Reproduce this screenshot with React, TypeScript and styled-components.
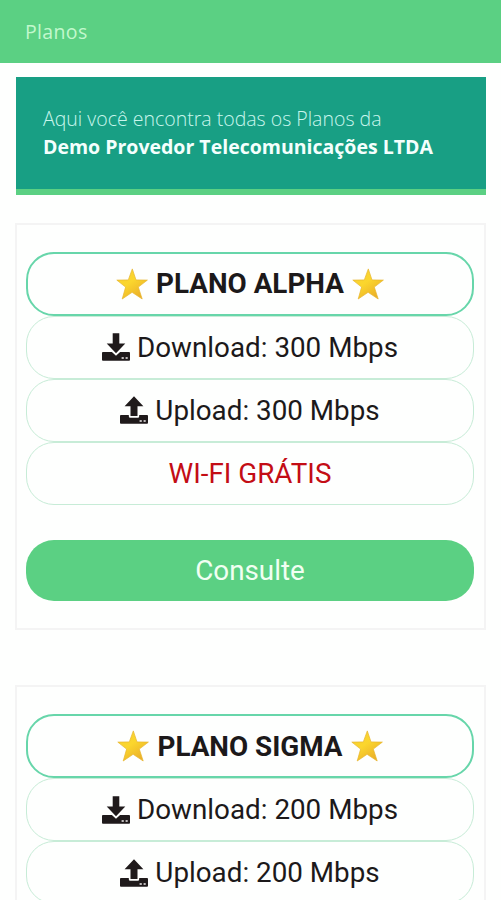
import React from "react";
import styled, { createGlobalStyle } from "styled-components";

const GlobalStyle = createGlobalStyle`
  * { box-sizing: border-box; }
  html, body { margin: 0; height: 900px; overflow: hidden; background: #fefffe; }
`;

const Page = styled.div`
  height: 900px;
  overflow: hidden;
  font-family: Roboto, "Liberation Sans", sans-serif;
  color: #1c191a;
`;

const Header = styled.header`
  height: 62.6px;
  padding: 1px 25px 0;
  display: flex;
  align-items: center;
  background: #5bd083;
  color: #c2f8cd;
  font: 400 19.5px "Open Sans", sans-serif;
  letter-spacing: 0.35px;
`;

const Banner = styled.section`
  height: 118px;
  margin: 14.4px 15px 28px 16px;
  padding: 28px 27px 0;
  background: #189f84;
  border-bottom: 6.5px solid #5bd083;
  font-family: "Open Sans", sans-serif;
  font-size: 19.5px;
  line-height: 28px;
  white-space: nowrap;
`;

const Intro = styled.div`
  font-weight: 300;
  color: #c9f6ed;
`;

const Company = styled.div`
  font-weight: 700;
  color: #f4fffd;
`;

const Card = styled.article`
  height: 407px;
  margin: 0 15px 55.5px;
  padding: 27px 10px 0 9px;
  border: 2px solid #f4f4f4;
`;

const PlanRow = styled.div<{ $title?: boolean; $promo?: boolean }>`
  height: ${(p) => (p.$title ? 64 : 63)}px;
  display: flex;
  align-items: center;
  justify-content: center;
  gap: ${(p) => (p.$title ? 8 : 7)}px;
  border: ${(p) => (p.$title ? "2px solid #67d6aa" : "1.5px solid #c7ecd7")};
  border-radius: 28px;
  font-size: 27.8px;
  font-weight: ${(p) => (p.$title ? 700 : 400)};
  color: ${(p) => (p.$promo ? "#c30d15" : "inherit")};
  white-space: nowrap;
`;

const Consult = styled.button`
  display: block;
  width: 100%;
  height: 60.5px;
  margin-top: 35.5px;
  padding: 0;
  border: 0;
  border-radius: 28px;
  background: #5bd083;
  color: #f1fff2;
  font: 400 27.8px Roboto, sans-serif;
`;

const Icon = styled.svg`
  flex: none;
  display: block;
`;

function Star() {
  return (
    <Icon width="32" height="32" viewBox="0 0 32 32">
      <defs>
        <linearGradient id="gold" x1="0" y1="0" x2="0.7" y2="1">
          <stop offset="0" stopColor="#f6cf35" />
          <stop offset="0.5" stopColor="#fbd62d" />
          <stop offset="1" stopColor="#eaae28" />
        </linearGradient>
      </defs>
      <path
        d="M16.3 .9 20 11.9 31.4 12.1 22.3 19.1 26.2 31 16.1 24.3 6.2 31 9.6 19.1.8 12.1 12.3 11.9Z"
        fill="url(#gold)"
        stroke="#e6b52d"
        strokeWidth=".7"
        strokeLinejoin="round"
      />
    </Icon>
  );
}

function Transfer({ up = false }: { up?: boolean }) {
  return (
    <Icon width="28" height="28" viewBox="0 0 28 28" fill="#1f1a1b">
      <path
        d={
          up
            ? "M14 .2 23.4 10.2H17.5V20H10.5V10.2H4.6Z"
            : "M10.7.3H17.3V10.5H23.3L14 20.2 4.7 10.5H10.7Z"
        }
      />
      <path
        d={
          up
            ? "M.9 19H8.8V20.2Q8.8 21.7 10.3 21.7H17.7Q19.2 21.7 19.2 20.2V19H27.1Q28 19 28 20V26.8Q28 27.7 27.1 27.7H.9Q0 27.7 0 26.8V20Q0 19 .9 19Z"
            : "M.9 19H9.9L14 22.8 18.1 19H27.1Q28 19 28 20V26.8Q28 27.7 27.1 27.7H.9Q0 27.7 0 26.8V20Q0 19 .9 19Z"
        }
      />
      <path d="M19.6 24H21.8V26.1H19.6ZM23.6 24H25.7V26.1H23.6Z" fill="#bdb9ba" />
    </Icon>
  );
}

interface PlanProps {
  name: string;
  speed: number;
  promo?: string;
  action?: string;
}

function Plan({ name, speed, promo, action }: PlanProps) {
  return (
    <Card>
      <PlanRow $title>
        <Star />
        <span>{name}</span>
        <Star />
      </PlanRow>
      <PlanRow>
        <Transfer />
        <span>Download: {speed} Mbps</span>
      </PlanRow>
      <PlanRow>
        <Transfer up />
        <span>Upload: {speed} Mbps</span>
      </PlanRow>
      {promo && <PlanRow $promo>{promo}</PlanRow>}
      {action && <Consult>{action}</Consult>}
    </Card>
  );
}

export default function App() {
  return (
    <Page>
      <GlobalStyle />
      <Header>Planos</Header>
      <Banner>
        <Intro>Aqui você encontra todas os Planos da</Intro>
        <Company>Demo Provedor Telecomunicações LTDA</Company>
      </Banner>
      <Plan name="PLANO ALPHA" speed={300} promo="WI-FI GRÁTIS" action="Consulte" />
      <Plan name="PLANO SIGMA" speed={200} />
    </Page>
  );
}
